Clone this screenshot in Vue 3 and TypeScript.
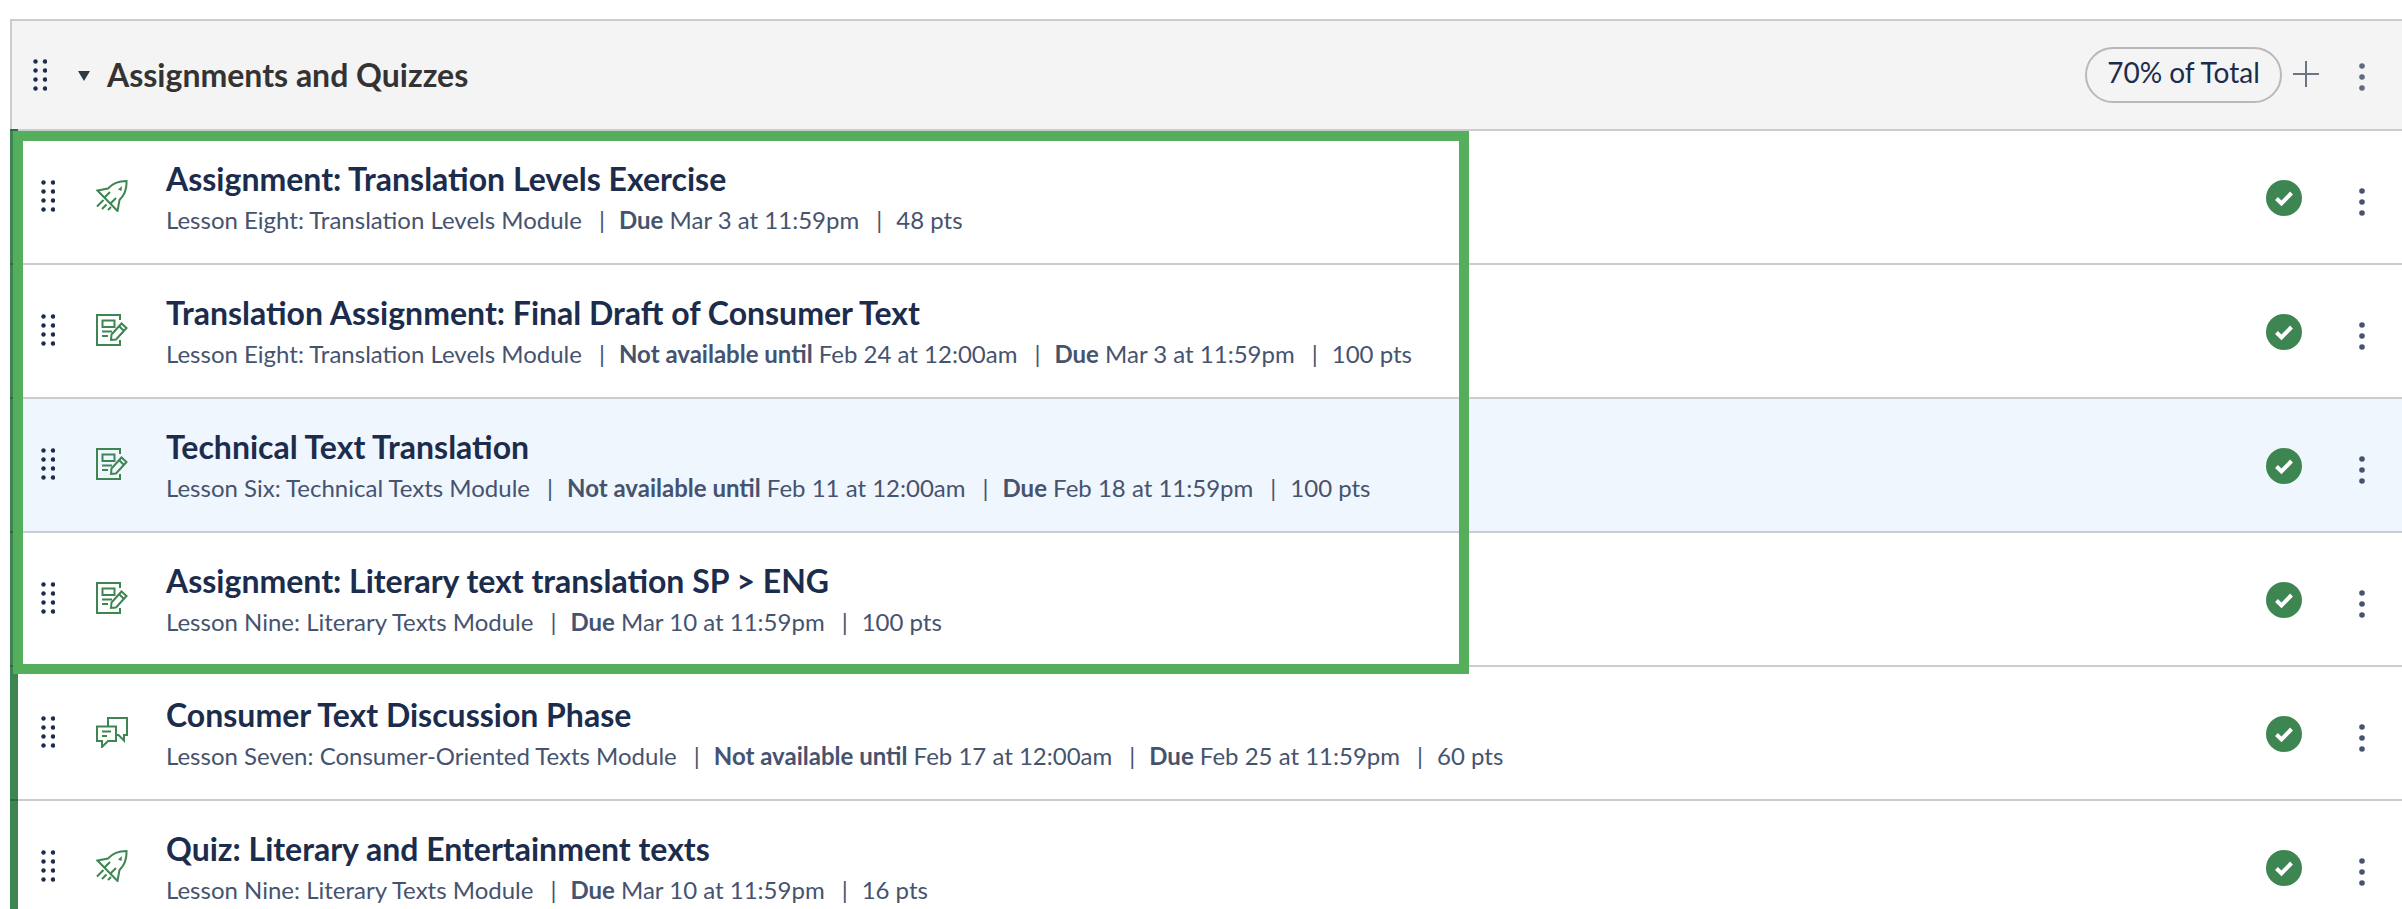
<template>
  <div class="page">
    <div class="group">
      <div class="group-header">
        <svg class="grip grip-head" viewBox="0 0 14 32">
          <circle v-for="d in gripDots" :key="d.id" :cx="d.x" :cy="d.y" r="2.2" />
        </svg>
        <span class="caret"></span>
        <h2 class="group-title">Assignments and Quizzes</h2>
        <span class="pill">70% of Total</span>
        <svg class="plus" viewBox="0 0 26 26">
          <path d="M0 13H26M13 0V26" />
        </svg>
        <svg class="kebab kebab-head" viewBox="0 0 6 28">
          <circle cx="3" cy="3" r="2.8" />
          <circle cx="3" cy="14" r="2.8" />
          <circle cx="3" cy="25" r="2.8" />
        </svg>
      </div>

      <div
        v-for="row in rows"
        :key="row.title"
        class="row"
        :class="{ active: row.active }"
      >
        <div class="row-inner">
          <svg class="grip" viewBox="0 0 14 32">
            <circle v-for="d in gripDots" :key="d.id" :cx="d.x" :cy="d.y" r="2.2" />
          </svg>

          <svg class="type-icon" viewBox="0 0 32 32">
            <template v-if="row.type === 'quiz'">
              <path d="M1.500 10.500 12 8.500C16 4 21 1 30.500 1 31 10 28 15.500 23.500 20L21.500 31Z" />
              <path d="M8.500 17.500 14 12M14.500 23.500 20 18" />
              <path d="M1 26.500 7.500 20M6 29 10.500 24.500M12 30 15 27" />
              <path class="solid" d="M22 9.500 26 6 25.500 11Z" />
            </template>
            <template v-else-if="row.type === 'assignment'">
              <path d="M24 6V1H1V31H24V26" />
              <path d="M6.500 6.500H18.500V13H6.500ZM6 17.500H16M6 22H12" />
              <path d="M15 26 15.500 20.500 25.500 9.500 30.500 14 20 25.500ZM23 12 28 17" />
            </template>
            <template v-else>
              <path d="M1 10.500H20V25H12L6 31V25H1Z" />
              <path d="M12 10V2H31V19H28V24.500L22.500 19H20" />
              <path d="M6 15.500H15M6 20H11" />
            </template>
          </svg>

          <div class="row-text">
            <div class="row-title">{{ row.title }}</div>
            <div class="row-meta">
              <span>{{ row.module }}</span>
              <template v-for="m in row.meta" :key="m.text">
                <span class="sep">|</span>
                <span><b v-if="m.label">{{ m.label }}</b>{{ m.label ? ' ' : '' }}{{ m.text }}</span>
              </template>
            </div>
          </div>

          <svg class="check" viewBox="0 0 36 36">
            <circle cx="18" cy="18" r="18" />
            <path d="M10.500 18.500 15.500 23.500 25.500 13" />
          </svg>
          <svg class="kebab" viewBox="0 0 6 28">
            <circle cx="3" cy="3" r="2.8" />
            <circle cx="3" cy="14" r="2.8" />
            <circle cx="3" cy="25" r="2.8" />
          </svg>
        </div>
      </div>
    </div>

    <div class="highlight"></div>
  </div>
</template>

<script setup lang="ts">
interface MetaItem {
  label?: string
  text: string
}

interface Row {
  title: string
  module: string
  type: 'quiz' | 'assignment' | 'discussion'
  active?: boolean
  meta: MetaItem[]
}

const gripDots = [2.5, 11.5, 20.5, 29.5].flatMap((y) =>
  [2.5, 12].map((x) => ({ id: `${x}-${y}`, x, y }))
)

const rows: Row[] = [
  {
    title: 'Assignment: Translation Levels Exercise',
    module: 'Lesson Eight: Translation Levels Module',
    type: 'quiz',
    meta: [
      { label: 'Due', text: 'Mar 3 at 11:59pm' },
      { text: '48 pts' }
    ]
  },
  {
    title: 'Translation Assignment: Final Draft of Consumer Text',
    module: 'Lesson Eight: Translation Levels Module',
    type: 'assignment',
    meta: [
      { label: 'Not available until', text: 'Feb 24 at 12:00am' },
      { label: 'Due', text: 'Mar 3 at 11:59pm' },
      { text: '100 pts' }
    ]
  },
  {
    title: 'Technical Text Translation',
    module: 'Lesson Six: Technical Texts Module',
    type: 'assignment',
    active: true,
    meta: [
      { label: 'Not available until', text: 'Feb 11 at 12:00am' },
      { label: 'Due', text: 'Feb 18 at 11:59pm' },
      { text: '100 pts' }
    ]
  },
  {
    title: 'Assignment: Literary text translation SP > ENG',
    module: 'Lesson Nine: Literary Texts Module',
    type: 'assignment',
    meta: [
      { label: 'Due', text: 'Mar 10 at 11:59pm' },
      { text: '100 pts' }
    ]
  },
  {
    title: 'Consumer Text Discussion Phase',
    module: 'Lesson Seven: Consumer-Oriented Texts Module',
    type: 'discussion',
    meta: [
      { label: 'Not available until', text: 'Feb 17 at 12:00am' },
      { label: 'Due', text: 'Feb 25 at 11:59pm' },
      { text: '60 pts' }
    ]
  },
  {
    title: 'Quiz: Literary and Entertainment texts',
    module: 'Lesson Nine: Literary Texts Module',
    type: 'quiz',
    meta: [
      { label: 'Due', text: 'Mar 10 at 11:59pm' },
      { text: '16 pts' }
    ]
  }
]
</script>

<style>
html,
body {
  margin: 0;
  height: 909px;
  overflow: hidden;
  background: #fff;
}
</style>

<style scoped>
.page {
  position: relative;
  height: 909px;
  overflow: hidden;
  padding: 19px 0 0 10px;
  box-sizing: border-box;
  font-family: Lato, 'Liberation Sans', sans-serif;
  color: #1c2c4c;
}

.group-header {
  display: flex;
  align-items: center;
  height: 112px;
  padding: 0 37px 2px 21px;
  box-sizing: border-box;
  background: #f4f4f4;
  border-top: 2px solid #c7cdd1;
  border-left: 2px solid #c7cdd1;
  border-bottom: 2px solid #c7cdd1;
}

.grip {
  width: 14px;
  height: 32px;
  flex: none;
  fill: #1c2c4c;
}

.grip-head {
  margin-top: 2px;
}

.caret {
  width: 0;
  height: 0;
  margin-top: 4px;
  margin-left: 31px;
  border-left: 6.500px solid transparent;
  border-right: 6.500px solid transparent;
  border-top: 10px solid #2d3b45;
  flex: none;
}

.group-title {
  flex: 1;
  margin: 1px 0 0 17px;
  font-size: 32px;
  font-weight: 700;
  color: #333;
}

.pill {
  display: flex;
  align-items: center;
  justify-content: center;
  width: 197px;
  height: 56px;
  margin-top: 2px;
  padding-bottom: 7px;
  box-sizing: border-box;
  border: 2px solid #b9b9b9;
  border-radius: 28px;
  font-size: 28px;
}

.plus {
  width: 26px;
  height: 26px;
  margin-left: 11px;
  fill: none;
  stroke: #6b7685;
  stroke-width: 2;
}

.kebab {
  width: 6px;
  height: 28px;
  margin-left: 40px;
  flex: none;
  fill: #46536f;
}

.kebab-head {
  margin-top: 6px;
  fill: #5f6a80;
}

.row {
  position: relative;
  display: flex;
  border-left: 8px solid #3d8551;
}

.row::before {
  content: '';
  position: absolute;
  left: -8px;
  top: -2px;
  width: 8px;
  height: 2px;
  background: #2d6a3f;
}

.row-inner {
  display: flex;
  flex: 1;
  align-items: center;
  height: 134px;
  padding: 0 37px 2px 23px;
  box-sizing: border-box;
  border-bottom: 2px solid #c7cdd1;
}

.active .row-inner {
  background: #eff6fe;
}

.type-icon {
  width: 32px;
  height: 32px;
  margin-left: 41px;
  flex: none;
  fill: none;
  stroke: #3d8551;
  stroke-width: 2;
}

.type-icon .solid {
  fill: #3d8551;
  stroke: none;
}

.row-text {
  flex: 1;
  min-width: 0;
  margin-left: 38px;
  padding-top: 3px;
}

.row-title {
  font-size: 32px;
  font-weight: 700;
  line-height: 40px;
  color: #1c2c4c;
}

.row-meta {
  margin-top: 5px;
  font-size: 24px;
  line-height: 32px;
  color: #46536f;
  white-space: nowrap;
}

.row-meta b {
  font-weight: 700;
}

.sep {
  margin: 0 14px 0 17px;
}

.check {
  width: 36px;
  height: 36px;
  margin-top: 4px;
  flex: none;
  fill: #3d8551;
}

.check path {
  fill: none;
  stroke: #fff;
  stroke-width: 4;
}

.row .kebab {
  margin-top: 12px;
  margin-left: 57px;
}

.highlight {
  position: absolute;
  left: 13px;
  top: 131px;
  width: 1456px;
  height: 543px;
  box-sizing: border-box;
  border: 10px solid #55ae5b;
  pointer-events: none;
}
</style>
